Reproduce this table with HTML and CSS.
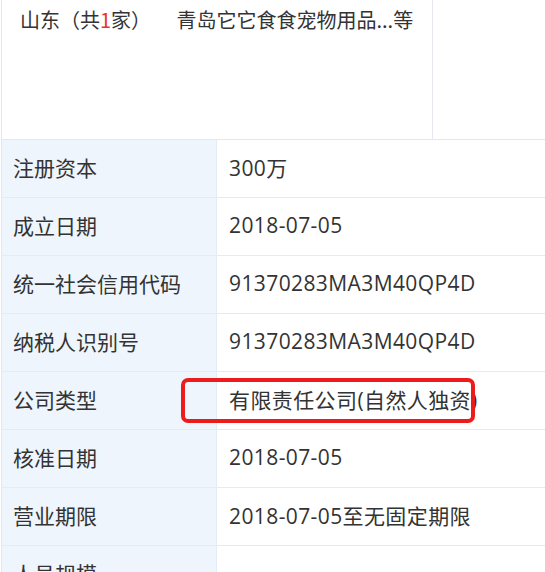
FILE: index.html
```html
<!DOCTYPE html>
<html lang="zh">
<head>
<meta charset="utf-8">
<link rel="stylesheet" href="styles.css">
</head>
<body>
<div class="sheet">
  <div class="top">
    <div class="top-main">
      <span class="region">山东（共<span class="red">1</span>家）</span>
      <span class="company">青岛它它食食宠物用品...等</span>
    </div>
    <div class="top-side"></div>
  </div>
  <div class="row"><div class="label">注册资本</div><div class="value">300万</div></div>
  <div class="row"><div class="label">成立日期</div><div class="value">2018-07-05</div></div>
  <div class="row"><div class="label">统一社会信用代码</div><div class="value">91370283MA3M40QP4D</div></div>
  <div class="row"><div class="label">纳税人识别号</div><div class="value">91370283MA3M40QP4D</div></div>
  <div class="row highlight"><div class="label">公司类型</div><div class="value">有限责任公司(自然人独资)</div><div class="mark"></div></div>
  <div class="row"><div class="label">核准日期</div><div class="value">2018-07-05</div></div>
  <div class="row"><div class="label">营业期限</div><div class="value">2018-07-05至无固定期限</div></div>
  <div class="row"><div class="label">人员规模</div><div class="value"></div></div>
</div>
</body>
</html>
```
FILE: styles.css
```css
html, body {
  margin: 0;
  padding: 0;
  background: #ffffff;
}
body {
  font-family: "Open Sans", "Noto Sans CJK SC", sans-serif;
  font-size: 20px;
  color: #333333;
  overflow: hidden;
  height: 572px;
}
.sheet {
  margin-left: 1px;
  border-left: 1px solid #e4e8ee;
  width: 560px;
}
.top {
  display: flex;
  height: 139px;
  border-bottom: 1px solid #e4e8ee;
}
.top-main {
  width: 431px;
  border-right: 1px solid #e4e8ee;
  padding: 7px 0 0 18px;
  box-sizing: border-box;
  line-height: 26px;
  white-space: nowrap;
  font-family: "Noto Sans CJK SC", sans-serif;
}
.region {
  display: inline-block;
  width: 152px;
}
.red { color: #e8352f; }
.top-side { flex: 1; }
.row {
  display: flex;
  height: 57px;
  border-bottom: 1px solid #e6ebf1;
  position: relative;
  font-size: 21px;
}
.label {
  width: 215px;
  background: #eef5fc;
  border-right: 1px solid #e3ebf4;
  padding: 0 0 3px 11px;
  box-sizing: border-box;
  display: flex;
  align-items: center;
  white-space: nowrap;
}
.value {
  flex: 1;
  padding: 0 0 3px 12px;
  display: flex;
  align-items: center;
  white-space: nowrap;
  letter-spacing: 0.4px;
}
.mark {
  position: absolute;
  left: 179px;
  top: 6px;
  width: 294px;
  height: 45px;
  box-sizing: border-box;
  border: 4px solid #ec1c1c;
  border-radius: 7px;
}
```
